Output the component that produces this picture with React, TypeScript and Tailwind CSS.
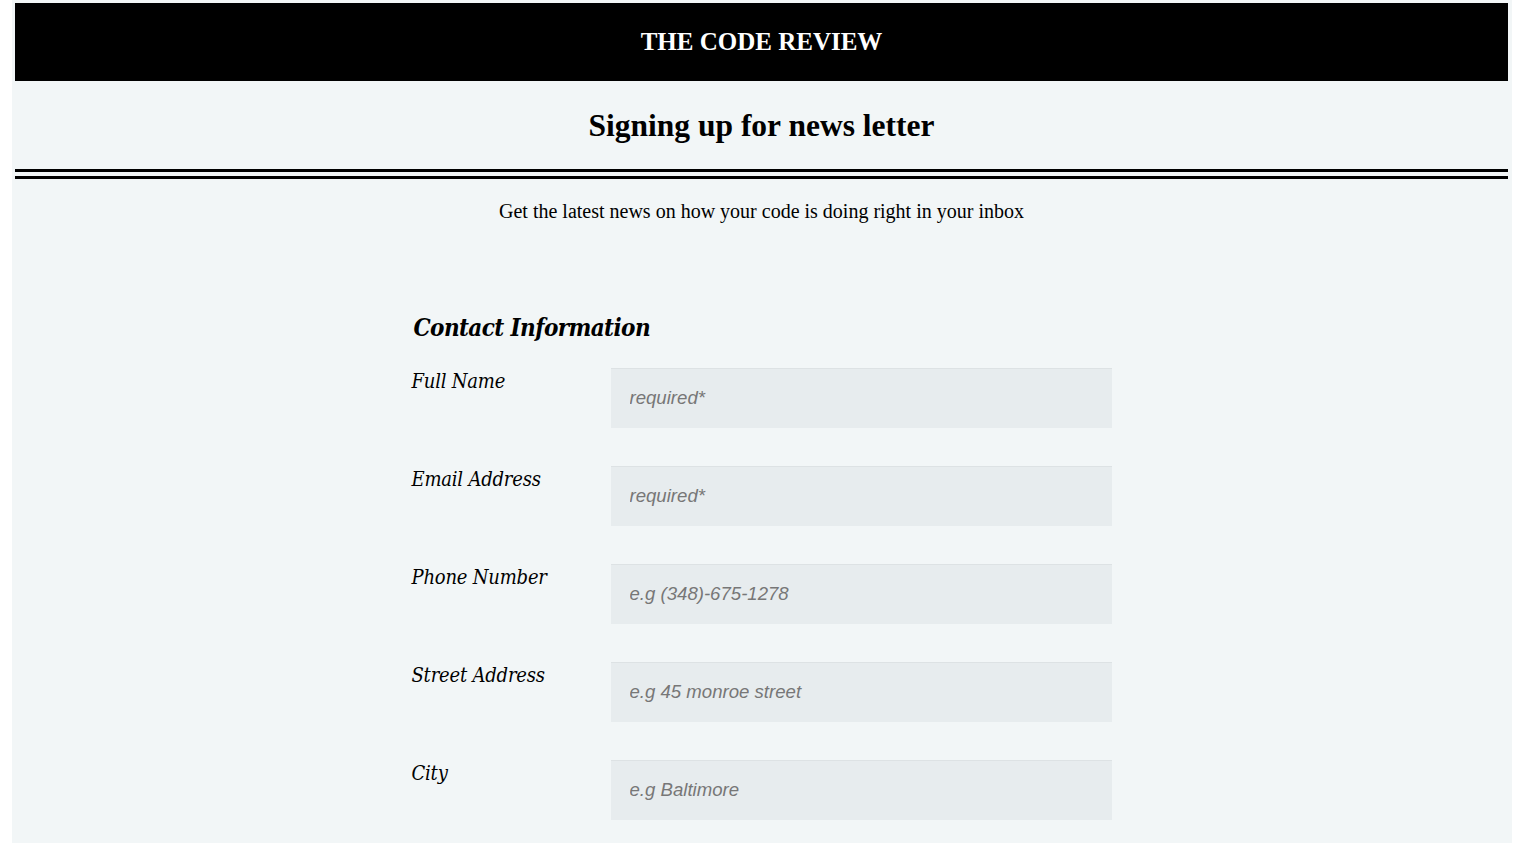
const fields = [
  { label: 'Full Name', placeholder: 'required*' },
  { label: 'Email Address', placeholder: 'required*' },
  { label: 'Phone Number', placeholder: 'e.g (348)-675-1278' },
  { label: 'Street Address', placeholder: 'e.g 45 monroe street' },
  { label: 'City', placeholder: 'e.g Baltimore' },
];

export default function App() {
  return (
    <div className="min-h-screen bg-white pl-[12px] pr-[5px]">
      <div className="min-h-[843px] bg-[#f2f6f7] pl-[3px] pr-[4px] pt-[3px]">
        <header className="h-[78px] bg-black flex items-center justify-center">
          <h1 className="text-white font-bold text-[25px] font-['Liberation_Serif',serif]">THE CODE REVIEW</h1>
        </header>

        <div className="h-[88px] flex items-center justify-center pt-[2px]">
          <h2 className="font-bold text-[31.5px] text-black font-['Liberation_Serif',serif]">Signing up for news letter</h2>
        </div>
        <div className="border-t-[10px] border-double border-black" />

        <p className="text-center text-[20px] text-black mt-[17px] font-['Liberation_Serif',serif]">
          Get the latest news on how your code is doing right in your inbox
        </p>

        <form className="w-[700px] mx-auto mt-[84px] font-['DejaVu_Serif_Condensed','DejaVu_Serif',serif]">
          <h3 className="italic font-bold text-[24px] ml-[2px] mb-[22px] tracking-[-0.6px] text-black">Contact Information</h3>
          <div className="flex flex-col gap-[38px]">
            {fields.map((f) => (
              <div key={f.label} className="flex items-start">
                <label className="w-[199px] italic text-[20px] text-black pt-[1px] leading-[24px] tracking-[-0.2px]">{f.label}</label>
                <input
                  placeholder={f.placeholder}
                  className="w-[501px] h-[60px] bg-[#e7ecee] border-t border-[#dde2e4] px-[19px] pb-[1px] text-[18.6px] italic font-['Liberation_Sans',sans-serif] placeholder:text-[#777] outline-none"
                />
              </div>
            ))}
          </div>
        </form>
      </div>
    </div>
  );
}
